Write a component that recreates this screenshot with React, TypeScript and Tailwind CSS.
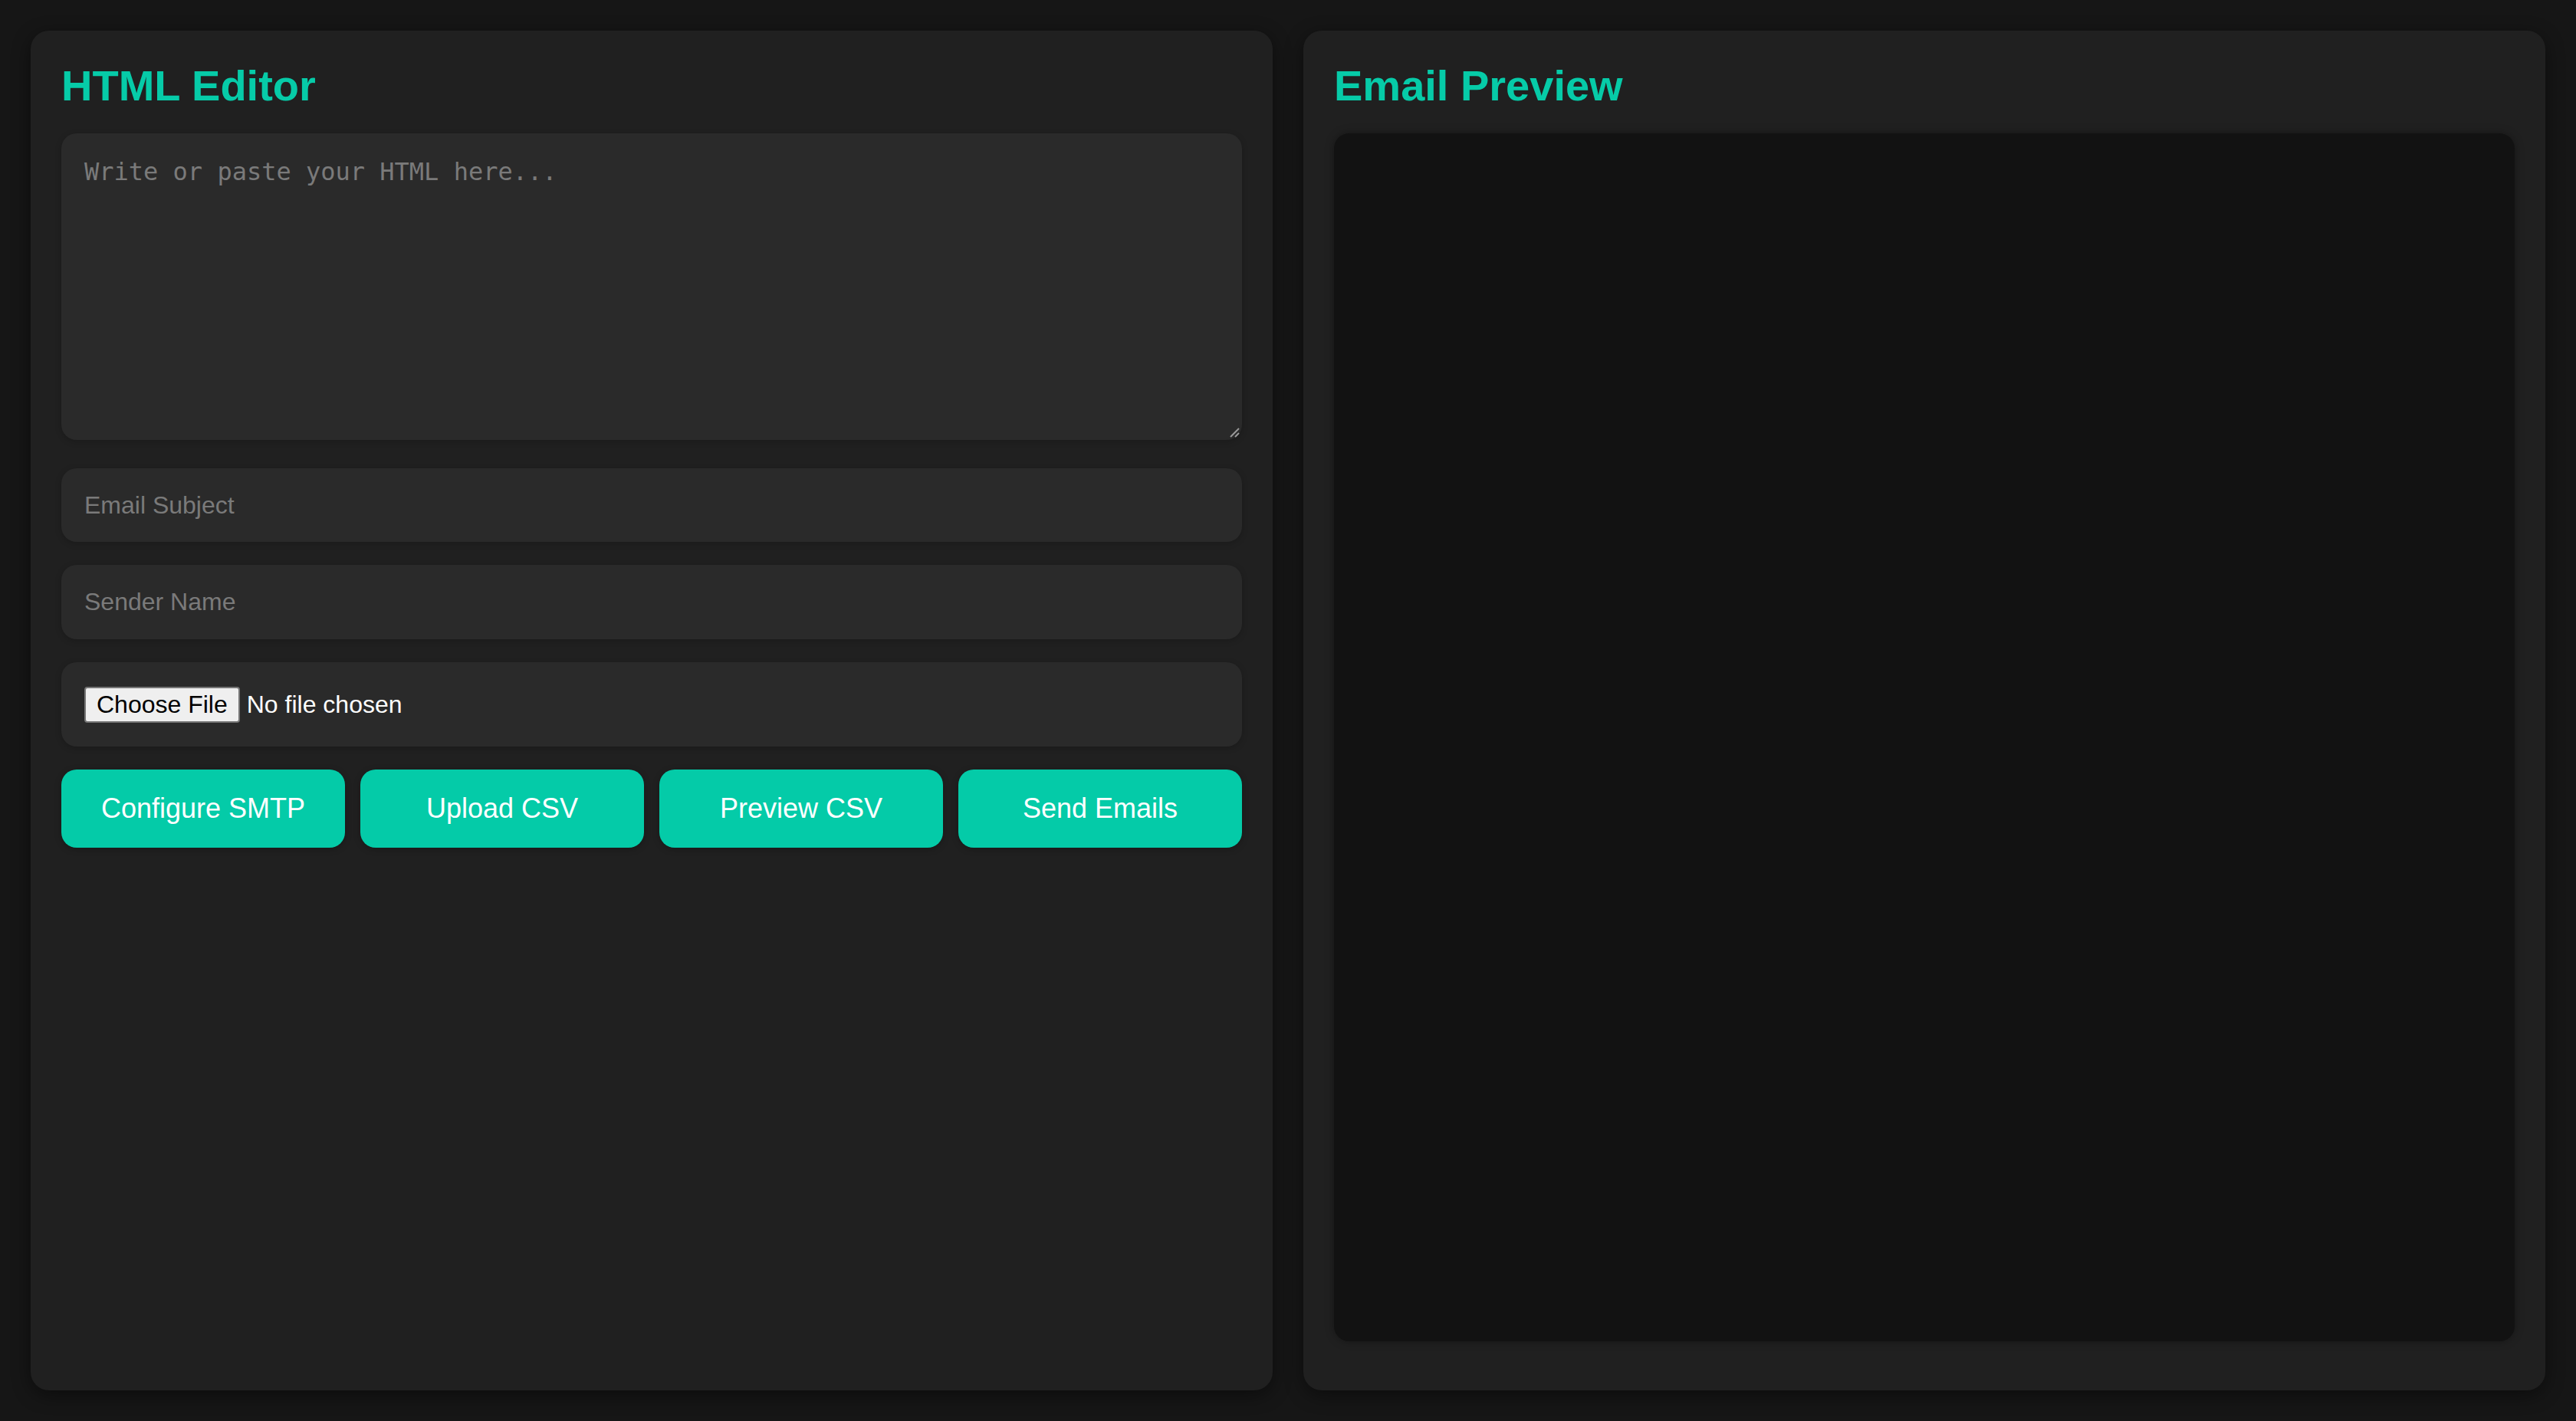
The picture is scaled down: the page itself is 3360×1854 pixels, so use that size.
export default function App() {
  const actions = ['Configure SMTP', 'Upload CSV', 'Preview CSV', 'Send Emails'];

  return (
    <div className="h-screen bg-[#161616] p-[40px] flex gap-[40px] font-['Liberation_Sans',Arial,sans-serif]">
      {/* editor side */}
      <section className="flex-1 flex flex-col rounded-[24px] bg-[#202020] p-[40px] shadow-[0_6px_24px_rgba(0,0,0,0.45)]">
        <h2 className="text-[56px] leading-[64px] font-bold text-[#06cba8] mb-[30px]">HTML Editor</h2>

        <div className="relative">
          <textarea
            placeholder="Write or paste your HTML here..."
            className="block h-[400px] w-full resize-none rounded-[20px] bg-[#2a2a2a] p-[30px] text-[32px] leading-[40px] text-white font-['DejaVu_Sans_Mono','Liberation_Mono',monospace] placeholder:text-[#7a7a7a] outline-none shadow-[0_2px_8px_rgba(0,0,0,0.2)]"
          />
          {/* resize grip */}
          <svg className="absolute bottom-[2px] right-[2px] h-[16px] w-[16px]" viewBox="0 0 16 16">
            <line x1="3" y1="14" x2="14" y2="3" stroke="#9a9a9a" strokeWidth="2" />
            <line x1="9" y1="14" x2="14" y2="9" stroke="#9a9a9a" strokeWidth="2" />
          </svg>
        </div>

        <input
          type="text"
          placeholder="Email Subject"
          className="mt-[37px] h-[96px] w-full rounded-[20px] bg-[#2a2a2a] px-[30px] text-[32px] text-white placeholder:text-[#7a7a7a] outline-none shadow-[0_2px_8px_rgba(0,0,0,0.2)]"
        />

        <input
          type="text"
          placeholder="Sender Name"
          className="mt-[30px] h-[97px] w-full rounded-[20px] bg-[#2a2a2a] px-[30px] text-[32px] text-white placeholder:text-[#7a7a7a] outline-none shadow-[0_2px_8px_rgba(0,0,0,0.2)]"
        />

        <label className="mt-[30px] flex h-[110px] w-full items-center rounded-[20px] bg-[#2a2a2a] px-[30px] shadow-[0_2px_8px_rgba(0,0,0,0.2)]">
          <input type="file" accept=".csv" className="hidden" />
          <span className="flex h-[47px] items-center rounded-[4px] border-2 border-[#767676] bg-[#efefef] px-[14px] text-[32px] text-black">
            Choose File
          </span>
          <span className="ml-[9px] text-[32px] text-white">No file chosen</span>
        </label>

        <div className="mt-[30px] grid grid-cols-4 gap-[20px]">
          {actions.map((label) => (
            <button
              key={label}
              className="h-[102px] rounded-[20px] bg-[#04cba8] text-[36px] text-white shadow-[0_2px_8px_rgba(0,0,0,0.25)]"
            >
              {label}
            </button>
          ))}
        </div>
      </section>

      {/* preview side */}
      <section className="flex-1 flex flex-col rounded-[24px] bg-[#202020] p-[40px] shadow-[0_6px_24px_rgba(0,0,0,0.45)]">
        <h2 className="text-[56px] leading-[64px] font-bold text-[#06cba8] mb-[30px]">Email Preview</h2>
        <div className="flex-1 mb-[24px] rounded-[20px] bg-[#121212] shadow-[0_0_12px_rgba(0,0,0,0.35)]" />
      </section>
    </div>
  );
}
